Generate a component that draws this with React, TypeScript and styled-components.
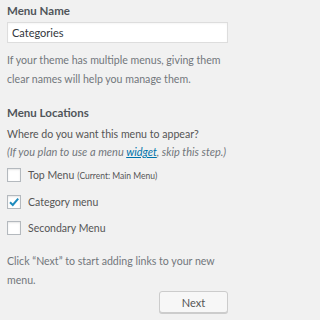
import styled, { createGlobalStyle } from "styled-components";

const GlobalStyle = createGlobalStyle`
  body {
    margin: 0;
    background: #f1f1f1;
    font-family: Lato, "Noto Sans", sans-serif;
    color: #444;
  }
`;

const Panel = styled.div`
  width: 236px;
  height: 320px;
  box-sizing: border-box;
  padding: 2px 8px 0 7px;
  display: flex;
  flex-direction: column;
`;

const Title = styled.h3<{ top: number }>`
  margin: ${(p) => p.top}px 0 0;
  font-size: 11.5px;
  font-weight: 700;
  line-height: 18px;
  color: #50555a;
`;

const NameInput = styled.input`
  margin-top: 2px;
  width: 221px;
  height: 21px;
  box-sizing: border-box;
  border: 1px solid #ddd;
  background: #fff;
  padding: 0 4px;
  font-family: inherit;
  font-size: 11px;
  color: #32373c;
  outline: none;
  box-shadow: inset 0 1px 2px rgba(0, 0, 0, 0.04);
`;

const Help = styled.p<{ top: number }>`
  margin: ${(p) => p.top}px 0 0;
  font-size: 10.6px;
  line-height: 18.5px;
  color: #72777c;
`;

const Text = styled.p`
  margin: 4px 0 0;
  font-size: 10.6px;
  line-height: 17px;
  color: #555;
`;

const Hint = styled.em`
  font-size: 11px;
  color: #72777c;
`;

const Link = styled.a`
  color: #0073aa;
  text-decoration: underline;
`;

const Options = styled.ul`
  list-style: none;
  margin: 7px 0 0;
  padding: 0;
  display: flex;
  flex-direction: column;
  gap: 12.5px;
`;

const Option = styled.li`
  display: flex;
  align-items: center;
  gap: 7px;
  height: 14px;
  font-size: 10.5px;
  color: #555;
`;

const Box = styled.span<{ checked?: boolean }>`
  width: 14px;
  height: 14px;
  box-sizing: border-box;
  border: 1px solid #b4b9be;
  background: #fff;
  box-shadow: inset 0 1px 2px rgba(0, 0, 0, 0.1);
  display: flex;
  align-items: center;
  justify-content: center;
  flex-shrink: 0;
`;

const Note = styled.small`
  font-size: 8.5px;
  margin-left: 3px;
`;

const Actions = styled.div`
  display: flex;
  justify-content: flex-end;
  margin-top: 2px;
`;

const Button = styled.button`
  width: 69px;
  height: 22px;
  border: 1px solid #ccc;
  border-radius: 3px;
  background: #f7f7f7;
  box-shadow: 0 1px 0 #ccc;
  font-family: inherit;
  font-size: 11px;
  color: #555;
  padding: 0;
`;

const options = [
  { label: "Top Menu", note: "(Current: Main Menu)", checked: false },
  { label: "Category menu", checked: true },
  { label: "Secondary Menu", checked: false },
];

export default function App() {
  return (
    <>
      <GlobalStyle />
      <Panel>
        <Title top={0}>Menu Name</Title>
        <NameInput defaultValue="Categories" />
        <Help top={8}>
          If your theme has multiple menus, giving them clear names will help
          you manage them.
        </Help>
        <Title top={16}>Menu Locations</Title>
        <Text>
          Where do you want this menu to appear?
          <br />
          <Hint>
            (If you plan to use a menu <Link>widget</Link>, skip this step.)
          </Hint>
        </Text>
        <Options>
          {options.map((o) => (
            <Option key={o.label}>
              <Box checked={o.checked}>
                {o.checked && (
                  <svg width="12" height="12" viewBox="0 0 12 12">
                    <path
                      d="M2 6.2 L4.8 9 L10.2 2.6"
                      fill="none"
                      stroke="#1e8cbe"
                      strokeWidth="2"
                    />
                  </svg>
                )}
              </Box>
              <span>
                {o.label}
                {o.note && <Note>{o.note}</Note>}
              </span>
            </Option>
          ))}
        </Options>
        <Help top={17}>
          Click “Next” to start adding links to your new menu.
        </Help>
        <Actions>
          <Button>Next</Button>
        </Actions>
      </Panel>
    </>
  );
}
